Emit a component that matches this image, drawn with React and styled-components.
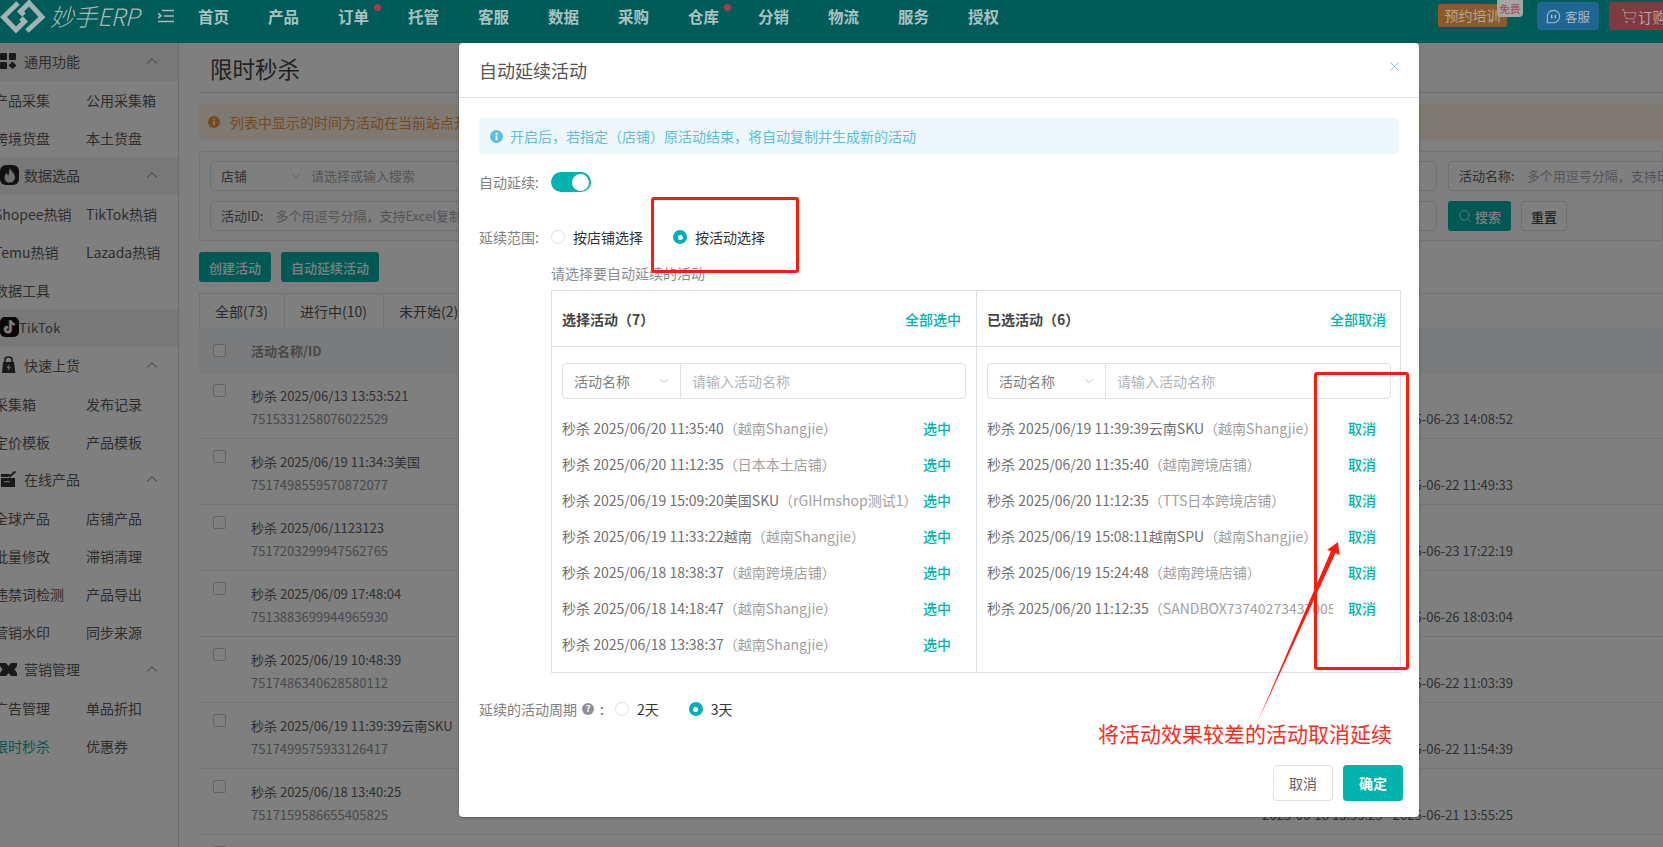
import React from 'react';
import styled, { createGlobalStyle } from 'styled-components';
import { ChevronDown, ChevronUp, Search, ShoppingCart, X } from 'lucide-react';

const Global = createGlobalStyle`
  html, body { margin: 0; padding: 0; height: 100%; overflow: hidden; background: #fff; }
  #root { height: 100%; }
  * { box-sizing: border-box; }
  body { font-family: "Noto Sans CJK SC", "Noto Sans", sans-serif; font-size: 14px; color: #606266; }
`;

const TEAL = '#00b3ad';

const Page = styled.div`
  position: relative; width: 1663px; height: 847px; overflow: hidden; background: #fff;
  display: flex; flex-direction: column;
`;

/* ---------- top bar (sits above the mask, carries its own dimmed colours) ---------- */
const TopBar = styled.header`
  position: relative; z-index: 2; height: 43px; flex: none; background: #005b59; display: flex; align-items: flex-start; overflow: hidden;
`;
const LogoBox = styled.div`
  width: 197px; flex: none; height: 43px; display: flex; align-items: flex-start;
`;
const LogoName = styled.span`
  font-size: 24px; line-height: 31px; font-style: italic; font-weight: 300; margin-left: 4px; color: #a9b9b8; letter-spacing: -.4px; white-space: nowrap;
`;
const MenuGlyph = styled.svg`
  margin: 9px 0 0 19px; flex: none;
`;
const Nav = styled.nav`
  display: flex; flex: 1; padding-top: 3px;
`;
const NavItem = styled.span`
  position: relative; width: 70px; flex: none; padding-left: 1px; font-size: 15.5px; font-weight: 700; line-height: 26px; color: #a9c2c0;
  ${p => p.$dot && `&::after { content: ''; position: absolute; left: 37px; top: 1px; width: 7px; height: 7px; border-radius: 50%; background: #ad3a4a; }`}
`;
const TopActions = styled.div`
  width: 225px; flex: none; display: flex; align-items: flex-start; padding-top: 2px;
`;
const TrainBtn = styled.span`
  position: relative; width: 69px; flex: none; height: 23px; margin-top: 2px; background: #8a5a2c; border-radius: 2px; color: #b5a692; font-size: 14px; line-height: 23px; text-align: center; white-space: nowrap;
`;
const FreeTag = styled.span`
  position: absolute; left: 59px; top: -6px; width: 26px; height: 19px; padding-top: 5px; background: #a5a5a5; border-radius: 4px; color: #9c4a55; font-size: 10.5px; line-height: 12px; text-align: center;
`;
const ServiceBtn = styled.span`
  margin-left: 30px; width: 62px; flex: none; height: 28px; background: #1f6792; border-radius: 3px; color: #a9b9c4; font-size: 12.5px; display: flex; align-items: center; justify-content: center; gap: 4px;
`;
const OrderBtn = styled.span`
  margin-left: 10px; width: 80px; height: 28px; flex: none; background: #7e3a3e; border-radius: 3px; color: #b9a5a6; font-size: 14.5px; display: flex; align-items: center; padding-left: 12px; white-space: nowrap; gap: 1px;
`;

/* ---------- sidebar ---------- */
const Shell = styled.div`
  flex: 1; display: flex; min-height: 0;
`;
const Side = styled.aside`
  width: 179px; flex: none; border-right: 1px solid #d8d8d8; overflow: hidden;
`;
const GroupHead = styled.div`
  height: 38px; display: flex; align-items: center; background: ${p => (p.$shade ? '#f0f0f0' : 'transparent')}; color: #5c5c5c; font-size: 14px; padding-bottom: 2px;
`;
const GroupIcon = styled.span`
  width: ${p => p.$w || 24}px; flex: none; height: 20px; display: flex; align-items: center;
`;
const GroupTitle = styled.span`
  flex: 1;
`;
const GroupCaret = styled.span`
  width: 35px; flex: none; color: #666; display: flex;
`;
const SideRow = styled.div`
  height: 38px; display: grid; grid-template-columns: 92px 1fr; margin-left: -6px; align-items: center; color: #5c5c5c; font-size: 14px; white-space: nowrap;
`;
const SideLink = styled.span`
  color: ${p => (p.$active ? TEAL : 'inherit')};
`;
const TikTokHead = styled(GroupHead)`
  font-size: 13px; letter-spacing: .3px;
`;

/* ---------- main ---------- */
const Main = styled.main`
  flex: 1; min-width: 0; padding-left: 20px; overflow: hidden;
`;
const PageTitle = styled.h1`
  margin: 0; height: 50px; padding: 9px 0 0 11px; border-bottom: 1px solid #d8d8d8; font-size: 22.5px; line-height: 32px; font-weight: 400; color: #444;
`;
const Notice = styled.div`
  margin-top: 11px; height: 36px; background: #fdf3e6; border-radius: 3px; display: flex; align-items: center; padding-left: 9px; gap: 10px; color: #f0923c; font-size: 14px; white-space: nowrap;
`;
const FilterCard = styled.section`
  margin-top: 11px; height: 90px; border: 1px solid #e4e7ed; border-radius: 3px; padding: 9px 0 0 10px; display: grid; grid-template-columns: 1227px 300px; column-gap: 11px; row-gap: 10px;
  grid-auto-rows: 30px;
`;
const Field = styled.div`
  border: 1px solid #dcdfe6; border-radius: 4px; display: flex; align-items: center; padding: 0 0 1px 10px; font-size: 13px; color: #606266; white-space: nowrap; overflow: hidden;
`;
const FieldSelect = styled.span`
  width: 68px; flex: none;
`;
const FieldCaret = styled.span`
  width: 22px; flex: none; display: flex; color: #aaa;
`;
const Hint = styled.span`
  color: #a8abb2; margin-left: ${p => p.$gap || 0}px;
`;
const SearchBar = styled.div`
  display: flex; gap: 10px;
`;
const PrimaryBtn = styled.button`
  height: 30px; padding: 0 10px; border: 0; border-radius: 3px; background: #00b0aa; color: #fff; font: inherit; font-size: 13px; font-weight: 500; display: inline-flex; align-items: center; gap: 3px; white-space: nowrap;
`;
const PlainBtn = styled.button`
  height: 30px; width: 46px; background: #fff; border: 1px solid #dcdfe6; border-radius: 3px; color: #444; font: inherit; font-size: 13px; font-weight: 500; padding: 0;
`;
const ActionRow = styled.div`
  margin-top: 11px; display: flex; gap: 10px;
`;
const Tabs = styled.div`
  margin-top: 11px; height: 35px; display: flex; border-top: 1px solid #e4e7ed;
`;
const Tab = styled.span`
  border-left: 1px solid #e4e7ed; width: ${p => p.$w}px; flex: none; padding-left: 15px; line-height: 34px; color: #555; font-size: 14px; white-space: nowrap;
`;
const TableHead = styled.div`
  height: 45px; background: #f5f6f8; display: grid; grid-template-columns: 52px 1fr; align-items: center; border-bottom: 1px solid #eceef2; font-size: 13px; font-weight: 700; color: #909399;
`;
const Row = styled.div`
  height: 66px; display: grid; grid-template-columns: 52px 1fr auto; border-bottom: 1px solid #e9ebef; padding-right: 150px; padding-top: 11px;
`;
const Check = styled.span`
  display: block; width: 13px; height: 13px; margin-left: 14px; border: 1px solid #c8c8cc; border-radius: 2px; background: #fff;
`;
const RowName = styled.div`
  font-size: 13px; line-height: 23px; color: #606266; white-space: nowrap;
`;
const RowId = styled.div`
  font-size: 13px; line-height: 23px; color: #909399; white-space: nowrap;
`;
const RowDate = styled.div`
  padding-top: 23px; font-size: 13px; line-height: 23px; color: #606266; white-space: nowrap;
`;

/* ---------- overlay + dialog ---------- */
const Overlay = styled.div`
  position: absolute; inset: 0; background: rgba(0, 0, 0, .5); padding: 43px 0 0 459px;
`;
const Dialog = styled.div`
  width: 960px; background: #fff; border-radius: 4px; display: flex; flex-direction: column; box-shadow: 0 1px 3px rgba(0,0,0,.3);
`;
const DialogHead = styled.div`
  height: 55px; flex: none; padding: 0 20px; border-bottom: 1px solid #e0e0e6; display: flex; align-items: center; justify-content: space-between; font-size: 18px; color: #555;
`;
const CloseBtn = styled.span`
  display: flex; color: #4fc0e4; margin-top: -8px; margin-right: -3px;
`;
const DialogBody = styled.div`
  padding: 0 20px;
`;
const InfoBar = styled.div`
  margin-top: 20px; height: 36px; border-radius: 4px; background: #eef7fa; display: flex; align-items: center; padding-left: 11px; gap: 7px; color: #5bbfe0; font-size: 14px;
`;
const SettingRow = styled.div`
  margin-top: ${p => p.$top}px; height: 40px; display: flex; align-items: center; font-size: 14px;
`;
const SettingLabel = styled.span`
  width: 72px; flex: none; color: #808080;
`;
const Switch = styled.span`
  width: 40px; height: 20px; border-radius: 10px; background: ${TEAL}; display: flex; justify-content: flex-end; align-items: center; padding-right: 2px;
  &::after { content: ''; width: 17px; height: 17px; border-radius: 50%; background: #fff; }
`;
const RadioGroup = styled.div`
  display: flex; gap: ${p => p.$gap}px; align-items: center;
`;
const RadioLabel = styled.label`
  display: inline-flex; align-items: center; gap: 8px; color: #333; font-size: 14px; white-space: nowrap;
`;
const RadioDot = styled.span`
  width: 14px; height: 14px; border-radius: 50%; flex: none; display: flex; align-items: center; justify-content: center;
  border: ${p => (p.$on ? 'none' : '1px solid #dcdfe6')}; background: ${p => (p.$on ? TEAL : '#fff')};
  ${p => p.$on && `&::after { content: ''; width: 5px; height: 5px; border-radius: 50%; background: #fff; }`}
`;
const Prompt = styled.div`
  margin: 6px 0 0 72px; line-height: 20px; color: #8c8c8c; font-size: 14px;
`;
const Transfer = styled.div`
  margin: 7px 0 0 72px; width: 850px; height: 383px; border: 1px solid #dcdfe6; display: grid; grid-template-columns: 424px 1fr;
`;
const Panel = styled.div`
  border-left: ${p => (p.$second ? '1px solid #dcdfe6' : 'none')}; min-width: 0;
`;
const PanelHead = styled.div`
  height: 56px; border-bottom: 1px solid #dcdfe6; display: flex; align-items: center; justify-content: space-between; padding: 0 ${p => p.$right}px 0 10px; font-size: 14px;
`;
const PanelTitle = styled.span`
  font-weight: 700; color: #444;
`;
const PanelAction = styled.span`
  font-weight: 500; color: ${TEAL};
`;
const SearchGroup = styled.div`
  margin: 16px 0 11px 10px; width: 404px; height: 36px; border: 1px solid #dcdfe6; border-radius: 4px; display: flex; align-items: center; font-size: 14px;
`;
const SearchSelect = styled.span`
  width: 118px; flex: none; height: 100%; border-right: 1px solid #dcdfe6; display: flex; align-items: center; justify-content: space-between; padding: 0 9px 0 11px; color: #808080;
`;
const SearchHint = styled.span`
  padding-left: 11px; color: #b0b3ba;
`;
const ListRow = styled.div`
  height: 36px; display: flex; align-items: center; padding-left: 10px; font-size: 14px;
`;
const ListName = styled.span`
  width: ${p => p.$w}px; flex: none; overflow: hidden; white-space: nowrap; color: #707070;
`;
const ListShop = styled.span`
  color: #a0a0a0;
`;
const ListAction = styled.span`
  margin-left: ${p => p.$gap}px; font-weight: 500; color: ${TEAL};
`;
const PeriodRow = styled.div`
  margin-top: 21px; height: 30px; display: flex; align-items: center; font-size: 14px; color: #808080;
`;
const HelpMark = styled.span`
  width: 12px; height: 12px; margin: 0 6px 0 5px; border-radius: 50%; background: #8f9198; color: #fff; font-size: 9px; font-weight: 700; line-height: 12px; text-align: center;
`;
const Colon = styled.span`
  width: 15px; flex: none; color: #666;
`;
const DialogFoot = styled.div`
  margin-top: 41px; padding: 0 16px 16px 0; display: flex; justify-content: flex-end; gap: 10px;
`;
const FootCancel = styled.button`
  width: 60px; height: 36px; border: 1px solid #dcdfe6; border-radius: 4px; background: #fff; color: #606266; font: inherit; font-size: 14px; padding: 0;
`;
const FootOk = styled.button`
  width: 60px; height: 36px; border: 0; border-radius: 4px; background: ${TEAL}; color: #fff; font: inherit; font-size: 14px; font-weight: 700; padding: 0;
`;

/* ---------- red annotations lying over the dialog ---------- */
const Callout = styled.div`
  position: absolute; left: ${p => p.$x}px; top: ${p => p.$y}px; width: ${p => p.$w}px; height: ${p => p.$h}px;
  border: 3px solid #ff1a10; border-radius: 3px; pointer-events: none;
`;
const CalloutText = styled.div`
  position: absolute; left: 1098px; top: 717px; font-size: 21px; line-height: 32px; color: #ff2a20; white-space: nowrap;
`;
const ArrowLayer = styled.svg`
  position: absolute; left: 0; top: 0; pointer-events: none;
`;

/* ---------- icons ---------- */
const GridIcon = () => (
  <svg width="17" height="16" viewBox="0 0 17 16" fill="#333">
    <rect x="0" y="0" width="7" height="7" rx="1" /><rect x="9" y="0" width="7" height="7" rx="1" />
    <rect x="0" y="9" width="7" height="7" rx="1" /><path d="M12.5 8.5 L16.5 12.5 L12.5 16 L8.5 12.5 Z" />
  </svg>
);
const FireIcon = () => (
  <svg width="19" height="20" viewBox="0 0 19 20">
    <rect width="19" height="20" rx="6" fill="#222" />
    <path d="M10 2.5 C10.5 6 15 8 15 12.5 C15 15.5 12.5 17.5 9.5 17.5 C6.5 17.5 4.5 15.5 4.5 12.5 C4.5 10.5 5.5 9 6.8 7.5 C7 9 7.5 10 8.5 10.5 C9.2 8 9.2 5 10 2.5 Z" fill="#ddd" />
  </svg>
);
const BagIcon = () => (
  <svg width="17" height="18" viewBox="0 0 17 18">
    <path d="M5 6 V3.5 C5 2 6.5 1 8.5 1 C10.5 1 12 2 12 3.5 V6" fill="none" stroke="#333" strokeWidth="1.6" />
    <path d="M3 6 H14 L15.5 17 H2 Z" fill="#333" />
    <path d="M9.5 7.5 L6.5 12 H8.5 L7.5 15.5 L11 11 H9 Z" fill="#ccc" />
  </svg>
);
const EditIcon = () => (
  <svg width="17" height="16" viewBox="0 0 17 16">
    <path d="M1 3 H10 L8 6 H1 Z M1 7 H15 V16 H1 Z" fill="#333" />
    <path d="M15.5 0.5 L9 6" stroke="#333" strokeWidth="2" />
    <rect x="4" y="10" width="6" height="1.4" fill="#bbb" />
  </svg>
);
const TicketIcon = () => (
  <svg width="17" height="13" viewBox="0 0 17 13" fill="#333">
    <path d="M0 0 H6 L8.5 3 L11 0 H17 V3 L14.5 6.5 L17 10 V13 H11 L8.5 10 L6 13 H0 V10 L2.5 6.5 L0 3 Z" />
  </svg>
);
const TikTokIcon = () => (
  <svg width="19" height="20" viewBox="0 0 19 20">
    <rect width="19" height="20" rx="5" fill="#111" />
    <path d="M10.5 3.5 V12.6 A2.6 2.6 0 1 1 7.9 10 M10.5 3.5 C10.8 5.7 12.4 7 14.6 7.2" fill="none" stroke="#3fd0d8" strokeWidth="2" transform="translate(-.8 -.5)" />
    <path d="M10.5 3.5 V12.6 A2.6 2.6 0 1 1 7.9 10 M10.5 3.5 C10.8 5.7 12.4 7 14.6 7.2" fill="none" stroke="#ff4d70" strokeWidth="2" transform="translate(.8 .5)" />
    <path d="M10.5 3.5 V12.6 A2.6 2.6 0 1 1 7.9 10 M10.5 3.5 C10.8 5.7 12.4 7 14.6 7.2" fill="none" stroke="#fff" strokeWidth="2" />
  </svg>
);
const InfoGlyph = ({ color, size = 13 }) => (
  <svg width={size} height={size} viewBox="0 0 14 14" style={{ flex: 'none' }}>
    <circle cx="7" cy="7" r="7" fill={color} />
    <rect x="6" y="6" width="2" height="5" fill="#fff" /><rect x="6" y="3" width="2" height="2" fill="#fff" />
  </svg>
);
const Logo = () => (
  <svg width="46" height="34" viewBox="0 0 46 34" fill="none" stroke="#a3b3b2" strokeWidth="5" style={{ flex: 'none' }}>
    <path d="M18 3 L3.5 17 L16 30 L24.5 21.5 L21 18" />
    <path d="M27 31 L42 17 L29 3 L20.5 11.5 L24 15" />
  </svg>
);

/* ---------- data ---------- */
const sideGroups = [
  { title: '通用功能', icon: <GridIcon />, shade: true, rows: [[['产品采集'], ['公用采集箱']], [['跨境货盘'], ['本土货盘']]] },
  { title: '数据选品', icon: <FireIcon />, shade: true, rows: [[['Shopee热销'], ['TikTok热销']], [['Temu热销'], ['Lazada热销']], [['数据工具']]] },
  { tiktok: true },
  { title: '快速上货', icon: <BagIcon />, rows: [[['采集箱'], ['发布记录']], [['定价模板'], ['产品模板']]] },
  { title: '在线产品', icon: <EditIcon />, rows: [[['全球产品'], ['店铺产品']], [['批量修改'], ['滞销清理']], [['违禁词检测'], ['产品导出']], [['营销水印'], ['同步来源']]] },
  { title: '营销管理', icon: <TicketIcon />, rows: [[['广告管理'], ['单品折扣']], [['限时秒杀', true], ['优惠券']]] },
];

const navItems = [['首页'], ['产品'], ['订单', true], ['托管'], ['客服'], ['数据'], ['采购'], ['仓库', true], ['分销'], ['物流'], ['服务'], ['授权']];

const tableRows = [
  ['秒杀 2025/06/13 13:53:521', '7515331258076022529', '2025-06-20 14:08:52 - 2025-06-23 14:08:52'],
  ['秒杀 2025/06/19 11:34:3美国', '7517498559570872077', '2025-06-19 11:49:33 - 2025-06-22 11:49:33'],
  ['秒杀 2025/06/1123123', '7517203299947562765', '2025-06-20 17:22:19 - 2025-06-23 17:22:19'],
  ['秒杀 2025/06/09 17:48:04', '7513883699944965930', '2025-06-23 18:03:04 - 2025-06-26 18:03:04'],
  ['秒杀 2025/06/19 10:48:39', '7517486340628580112', '2025-06-19 11:03:39 - 2025-06-22 11:03:39'],
  ['秒杀 2025/06/19 11:39:39云南SKU', '7517499575933126417', '2025-06-19 11:54:39 - 2025-06-22 11:54:39'],
  ['秒杀 2025/06/18 13:40:25', '7517159586655405825', '2025-06-18 13:55:25 - 2025-06-21 13:55:25'],
  ['', '', ''],
];

const leftList = [
  ['秒杀 2025/06/20 11:35:40', '（越南Shangjie）'],
  ['秒杀 2025/06/20 11:12:35', '（日本本土店铺）'],
  ['秒杀 2025/06/19 15:09:20美国SKU', '（rGIHmshop测试1）'],
  ['秒杀 2025/06/19 11:33:22越南', '（越南Shangjie）'],
  ['秒杀 2025/06/18 18:38:37', '（越南跨境店铺）'],
  ['秒杀 2025/06/18 14:18:47', '（越南Shangjie）'],
  ['秒杀 2025/06/18 13:38:37', '（越南Shangjie）'],
];
const rightList = [
  ['秒杀 2025/06/19 11:39:39云南SKU', '（越南Shangjie）'],
  ['秒杀 2025/06/20 11:35:40', '（越南跨境店铺）'],
  ['秒杀 2025/06/20 11:12:35', '（TTS日本跨境店铺）'],
  ['秒杀 2025/06/19 15:08:11越南SPU', '（越南Shangjie）'],
  ['秒杀 2025/06/19 15:24:48', '（越南跨境店铺）'],
  ['秒杀 2025/06/20 11:12:35', '（SANDBOX7374027343700513）'],
];

function SideNav() {
  return (
    <Side>
      {sideGroups.map((g, i) =>
        g.tiktok ? (
          <TikTokHead key={i} $shade>
            <GroupIcon $w={19}><TikTokIcon /></GroupIcon>
            <GroupTitle>TikTok</GroupTitle>
          </TikTokHead>
        ) : (
          <React.Fragment key={i}>
            <GroupHead $shade={g.shade}>
              <GroupIcon>{g.icon}</GroupIcon>
              <GroupTitle>{g.title}</GroupTitle>
              <GroupCaret><ChevronUp size={18} strokeWidth={1.2} /></GroupCaret>
            </GroupHead>
            {g.rows.map((r, j) => (
              <SideRow key={j}>
                {r.map(([t, a]) => <SideLink key={t} $active={a}>{t}</SideLink>)}
              </SideRow>
            ))}
          </React.Fragment>
        )
      )}
    </Side>
  );
}

function Background() {
  return (
    <Main>
      <PageTitle>限时秒杀</PageTitle>
      <Notice>
        <InfoGlyph color="#f0923c" size={12} />
        列表中显示的时间为活动在当前站点开始和结束的时间，请注意时差
      </Notice>
      <FilterCard>
        <Field>
          <FieldSelect>店铺</FieldSelect>
          <FieldCaret><ChevronDown size={14} strokeWidth={1.2} /></FieldCaret>
          <Hint>请选择或输入搜索</Hint>
        </Field>
        <Field>活动名称:<Hint $gap={12}>多个用逗号分隔，支持Excel复制粘贴</Hint></Field>
        <Field>活动ID:<Hint $gap={12}>多个用逗号分隔，支持Excel复制粘贴</Hint></Field>
        <SearchBar>
          <PrimaryBtn><Search size={14} strokeWidth={1.4} />搜索</PrimaryBtn>
          <PlainBtn>重置</PlainBtn>
        </SearchBar>
      </FilterCard>
      <ActionRow>
        <PrimaryBtn>创建活动</PrimaryBtn>
        <PrimaryBtn>自动延续活动</PrimaryBtn>
      </ActionRow>
      <Tabs>
        <Tab $w={85}>全部(73)</Tab><Tab $w={99}>进行中(10)</Tab><Tab $w={90}>未开始(2)</Tab>
      </Tabs>
      <TableHead><Check />活动名称/ID</TableHead>
      {tableRows.map((r, i) => (
        <Row key={i}>
          <Check />
          <div><RowName>{r[0]}</RowName><RowId>{r[1]}</RowId></div>
          <RowDate>{r[2]}</RowDate>
        </Row>
      ))}
    </Main>
  );
}

function TransferPanel({ second, title, action, list, act }) {
  return (
    <Panel $second={second}>
      <PanelHead $right={second ? 14 : 15}>
        <PanelTitle>{title}</PanelTitle>
        <PanelAction>{action}</PanelAction>
      </PanelHead>
      <SearchGroup>
        <SearchSelect>活动名称<ChevronDown size={14} strokeWidth={1.2} color="#aaa" /></SearchSelect>
        <SearchHint>请输入活动名称</SearchHint>
      </SearchGroup>
      {list.map((r, i) => (
        <ListRow key={i}>
          <ListName $w={second ? 346 : 347}>{r[0]}<ListShop>{r[1]}</ListShop></ListName>
          <ListAction $gap={second ? 15 : 14}>{act}</ListAction>
        </ListRow>
      ))}
    </Panel>
  );
}

function ExtendDialog() {
  return (
    <Dialog>
      <DialogHead>
        自动延续活动
        <CloseBtn><X size={15} strokeWidth={1.2} /></CloseBtn>
      </DialogHead>
      <DialogBody>
        <InfoBar>
          <InfoGlyph color="#5bbfe0" />
          开启后，若指定（店铺）原活动结束，将自动复制并生成新的活动
        </InfoBar>
        <SettingRow $top={8}>
          <SettingLabel>自动延续:</SettingLabel>
          <Switch />
        </SettingRow>
        <SettingRow $top={15}>
          <SettingLabel>延续范围:</SettingLabel>
          <RadioGroup $gap={30}>
            <RadioLabel><RadioDot />按店铺选择</RadioLabel>
            <RadioLabel><RadioDot $on />按活动选择</RadioLabel>
          </RadioGroup>
        </SettingRow>
        <Prompt>请选择要自动延续的活动</Prompt>
        <Transfer>
          <TransferPanel title="选择活动（7）" action="全部选中" list={leftList} act="选中" />
          <TransferPanel second title="已选活动（6）" action="全部取消" list={rightList} act="取消" />
        </Transfer>
        <PeriodRow>
          延续的活动周期
          <HelpMark>?</HelpMark>
          <Colon>:</Colon>
          <RadioGroup $gap={30}>
            <RadioLabel><RadioDot />2天</RadioLabel>
            <RadioLabel><RadioDot $on />3天</RadioLabel>
          </RadioGroup>
        </PeriodRow>
      </DialogBody>
      <DialogFoot>
        <FootCancel>取消</FootCancel>
        <FootOk>确定</FootOk>
      </DialogFoot>
    </Dialog>
  );
}

export default function App() {
  return (
    <Page>
      <Global />
      <TopBar>
        <LogoBox>
          <Logo />
          <LogoName>妙手ERP</LogoName>
          <MenuGlyph width="16" height="14" viewBox="0 0 16 14" stroke="#a9b9b8" fill="none">
            <path d="M4 1.5 H16 M6 7 H16 M0 12.5 H16 M0 4 L3 7 L0 9" strokeWidth="1.6" />
          </MenuGlyph>
        </LogoBox>
        <Nav>
          {navItems.map(([t, d]) => <NavItem key={t} $dot={d}>{t}</NavItem>)}
        </Nav>
        <TopActions>
          <TrainBtn>预约培训<FreeTag>免费</FreeTag></TrainBtn>
          <ServiceBtn>
            <svg width="15" height="15" viewBox="0 0 16 16" fill="none" stroke="#a9b9c4" strokeWidth="1.2">
              <path d="M8 1.4 A6.6 6.6 0 1 1 8 14.6 H1.4 V8 A6.6 6.6 0 0 1 8 1.4 Z" /><path d="M6 6 V10 M10 6 V10" strokeWidth="1.6" />
            </svg>
            客服
          </ServiceBtn>
          <OrderBtn><ShoppingCart size={16} strokeWidth={1.1} />订购</OrderBtn>
        </TopActions>
      </TopBar>
      <Shell>
        <SideNav />
        <Background />
      </Shell>
      <Overlay>
        <ExtendDialog />
        <Callout $x={651} $y={197} $w={148} $h={76} />
        <Callout $x={1314} $y={372} $w={95} $h={298} />
        <CalloutText>将活动效果较差的活动取消延续</CalloutText>
        <ArrowLayer width="1663" height="847" viewBox="0 0 1663 847">
          <polygon points="1257,723 1331,551 1327,550 1338,542 1339.5,555 1335.5,553" fill="#ff1a10" />
        </ArrowLayer>
      </Overlay>
    </Page>
  );
}
